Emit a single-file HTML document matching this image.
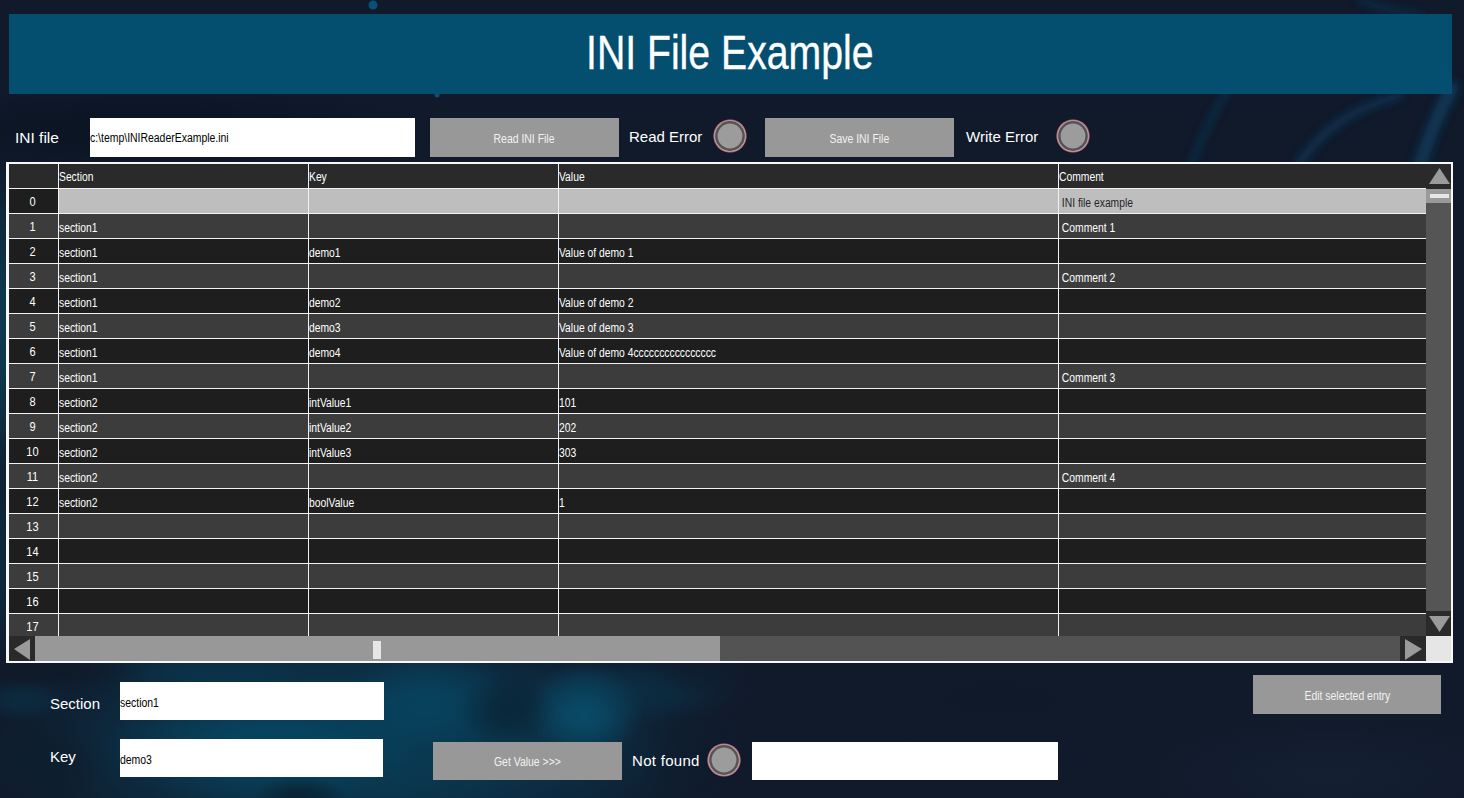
<!DOCTYPE html>
<html><head><meta charset="utf-8">
<style>
html,body{margin:0;padding:0;}
body{width:1464px;height:798px;position:relative;overflow:hidden;background:#101a2b;font-family:"Liberation Sans",sans-serif;}
.abs{position:absolute;}
.bg{position:absolute;left:0;top:0;}
.cell{position:absolute;height:24px;line-height:24px;font-size:12px;color:#fff;white-space:pre;transform:scaleX(0.86);transform-origin:0 0;}
.num{position:absolute;width:49px;height:24px;line-height:24px;font-size:13px;color:#fff;text-align:center;transform:scaleX(0.85);}
.lbl{position:absolute;font-size:15px;color:#fff;white-space:pre;line-height:18px;}
.btn{position:absolute;background:#989898;color:#f2f2f2;font-size:12px;text-align:center;}
.btn span{display:inline-block;transform:scaleX(0.87);}
.tb{position:absolute;background:#fff;}
.tbt{position:absolute;color:#000;font-size:12px;white-space:pre;transform:scaleX(0.87);transform-origin:0 0;}
.led{position:absolute;width:34px;height:34px;}
</style></head>
<body>
<div class="bg" style="width:1464px;height:798px;background:#101a2b;"></div>
<div class="abs" style="left:-20px;top:605px;width:760px;height:280px;background:radial-gradient(closest-side,rgba(8,62,88,0.95) 0%,rgba(8,62,88,0.807) 30%,rgba(8,62,88,0.475) 60%,rgba(8,62,88,0.142) 85%,rgba(8,62,88,0) 100%);"></div>
<div class="abs" style="left:100px;top:685px;width:320px;height:120px;background:radial-gradient(closest-side,rgba(5,78,108,0.55) 0%,rgba(5,78,108,0.468) 30%,rgba(5,78,108,0.275) 60%,rgba(5,78,108,0.083) 85%,rgba(5,78,108,0) 100%);"></div>
<div class="abs" style="left:525px;top:662px;width:120px;height:100px;background:radial-gradient(closest-side,rgba(8,84,115,0.8) 0%,rgba(8,84,115,0.680) 30%,rgba(8,84,115,0.400) 60%,rgba(8,84,115,0.120) 85%,rgba(8,84,115,0) 100%);"></div>
<div class="abs" style="left:530px;top:655px;width:220px;height:70px;background:radial-gradient(closest-side,rgba(8,60,85,0.45) 0%,rgba(8,60,85,0.383) 30%,rgba(8,60,85,0.225) 60%,rgba(8,60,85,0.068) 85%,rgba(8,60,85,0) 100%);"></div>
<div class="abs" style="left:340px;top:650px;width:180px;height:100px;background:radial-gradient(closest-side,rgba(6,74,104,0.6) 0%,rgba(6,74,104,0.510) 30%,rgba(6,74,104,0.300) 60%,rgba(6,74,104,0.090) 85%,rgba(6,74,104,0) 100%);"></div>
<div class="abs" style="left:80px;top:647px;width:240px;height:50px;background:radial-gradient(closest-side,rgba(8,60,85,0.5) 0%,rgba(8,60,85,0.425) 30%,rgba(8,60,85,0.250) 60%,rgba(8,60,85,0.075) 85%,rgba(8,60,85,0) 100%);"></div>
<div class="abs" style="left:650px;top:647px;width:100px;height:50px;background:radial-gradient(closest-side,rgba(14,30,48,0.6) 0%,rgba(14,30,48,0.510) 30%,rgba(14,30,48,0.300) 60%,rgba(14,30,48,0.090) 85%,rgba(14,30,48,0) 100%);"></div>
<div class="abs" style="left:455px;top:672px;width:100px;height:76px;background:radial-gradient(closest-side,rgba(9,32,48,0.6) 0%,rgba(9,32,48,0.510) 30%,rgba(9,32,48,0.300) 60%,rgba(9,32,48,0.090) 85%,rgba(9,32,48,0) 100%);"></div>
<div class="abs" style="left:250px;top:776px;width:100px;height:44px;background:radial-gradient(closest-side,rgba(10,30,45,0.8) 0%,rgba(10,30,45,0.680) 30%,rgba(10,30,45,0.400) 60%,rgba(10,30,45,0.120) 85%,rgba(10,30,45,0) 100%);"></div>
<div class="abs" style="left:-30px;top:720px;width:140px;height:90px;background:radial-gradient(closest-side,rgba(13,30,45,0.9) 0%,rgba(13,30,45,0.765) 30%,rgba(13,30,45,0.450) 60%,rgba(13,30,45,0.135) 85%,rgba(13,30,45,0) 100%);"></div>
<div class="abs" style="left:-10px;top:654px;width:160px;height:36px;background:radial-gradient(closest-side,rgba(14,26,41,0.7) 0%,rgba(14,26,41,0.595) 30%,rgba(14,26,41,0.350) 60%,rgba(14,26,41,0.105) 85%,rgba(14,26,41,0) 100%);"></div>
<div class="abs" style="left:-30px;top:678px;width:100px;height:44px;background:radial-gradient(closest-side,rgba(10,50,70,0.7) 0%,rgba(10,50,70,0.595) 30%,rgba(10,50,70,0.350) 60%,rgba(10,50,70,0.105) 85%,rgba(10,50,70,0) 100%);"></div>
<div class="abs" style="left:640px;top:700px;width:120px;height:120px;background:radial-gradient(closest-side,rgba(14,26,42,0.6) 0%,rgba(14,26,42,0.510) 30%,rgba(14,26,42,0.300) 60%,rgba(14,26,42,0.090) 85%,rgba(14,26,42,0) 100%);"></div>
<div class="abs" style="left:-30px;top:160px;width:60px;height:340px;background:radial-gradient(closest-side,rgba(11,62,85,0.9) 0%,rgba(11,62,85,0.765) 30%,rgba(11,62,85,0.450) 60%,rgba(11,62,85,0.135) 85%,rgba(11,62,85,0) 100%);"></div>
<div class="abs" style="left:-25px;top:450px;width:50px;height:220px;background:radial-gradient(closest-side,rgba(11,44,64,0.8) 0%,rgba(11,44,64,0.680) 30%,rgba(11,44,64,0.400) 60%,rgba(11,44,64,0.120) 85%,rgba(11,44,64,0) 100%);"></div>
<div class="abs" style="left:-150px;top:80px;width:600px;height:100px;background:radial-gradient(closest-side,rgba(8,18,31,0.7) 0%,rgba(8,18,31,0.595) 30%,rgba(8,18,31,0.350) 60%,rgba(8,18,31,0.105) 85%,rgba(8,18,31,0) 100%);"></div>
<div class="abs" style="left:1150px;top:720px;width:360px;height:110px;background:radial-gradient(closest-side,rgba(24,36,56,0.5) 0%,rgba(24,36,56,0.425) 30%,rgba(24,36,56,0.250) 60%,rgba(24,36,56,0.075) 85%,rgba(24,36,56,0) 100%);"></div>
<div class="abs" style="left:800px;top:640px;width:400px;height:120px;background:radial-gradient(closest-side,rgba(14,24,40,0.4) 0%,rgba(14,24,40,0.340) 30%,rgba(14,24,40,0.200) 60%,rgba(14,24,40,0.060) 85%,rgba(14,24,40,0) 100%);"></div>
<svg class="bg" width="1464" height="798" viewBox="0 0 1464 798">
<defs><filter id="b3" filterUnits="userSpaceOnUse" x="0" y="0" width="1464" height="798"><feGaussianBlur stdDeviation="4"/></filter></defs>
<g filter="url(#b3)" fill="none" stroke="#0f3c5e" stroke-linecap="round">
 <path d="M1190,170 C1200,140 1215,110 1230,85" stroke-width="5" opacity="0.7"/>
 <path d="M1295,170 C1320,130 1350,110 1400,95" stroke-width="7" opacity="0.8"/>
 <path d="M1418,172 C1427,140 1440,110 1452,88" stroke-width="13" opacity="0.85"/>
 <path d="M1360,0 C1380,8 1400,14 1420,16" stroke-width="6" opacity="0.6"/>
</g>
<circle cx="373" cy="5" r="4.5" fill="#0b4e78"/>
<circle cx="437" cy="95" r="2.5" fill="#0b4e78"/>
</svg>
<div class="abs" style="left:9px;top:14px;width:1443px;height:80px;background:#044e70;"></div>
<div class="abs" style="left:586px;top:23px;height:60px;line-height:60px;color:#fff;font-size:47.5px;white-space:pre;transform:scaleX(0.825);transform-origin:0 0;-webkit-text-stroke:0.35px #fff;">INI File Example</div>

<div class="lbl" style="left:15px;top:129px;font-size:15.5px;">INI file</div>
<div class="tb" style="left:90px;top:118px;width:325px;height:39px;"></div><div class="tbt" style="left:90px;top:131px;">c:\temp\INIReaderExample.ini</div>
<div class="btn" style="left:430px;top:118px;width:189px;height:39px;line-height:42px;"><span>Read INI File</span></div>
<div class="lbl" style="left:629px;top:128px;">Read Error</div>
<svg class="led" style="left:713px;top:119px;" viewBox="0 0 34 34"><circle cx="17" cy="17" r="16.6" fill="#c86e7e"/><circle cx="17" cy="17" r="15.6" fill="#b4b4b4"/><circle cx="17" cy="17" r="14.9" fill="#545454"/><circle cx="17" cy="17" r="12.4" fill="#9c9c9c"/></svg>
<div class="btn" style="left:765px;top:118px;width:189px;height:39px;line-height:42px;"><span>Save INI File</span></div>
<div class="lbl" style="left:966px;top:128px;">Write Error</div>
<svg class="led" style="left:1056px;top:119px;" viewBox="0 0 34 34"><circle cx="17" cy="17" r="16.6" fill="#c86e7e"/><circle cx="17" cy="17" r="15.6" fill="#b4b4b4"/><circle cx="17" cy="17" r="14.9" fill="#545454"/><circle cx="17" cy="17" r="12.4" fill="#9c9c9c"/></svg>

<div class="abs" style="left:6px;top:162px;width:1447px;height:501px;background:#f8f8f8;"></div>
<div class="abs" style="left:9px;top:164px;width:1442px;height:497px;background:#1e1e1e;"></div>
<div class="abs" style="left:9px;top:164px;width:1417px;height:24px;background:#2a2a2a"></div>
<div class="cell" style="left:59px;top:165px;">Section</div>
<div class="cell" style="left:309px;top:165px;">Key</div>
<div class="cell" style="left:559px;top:165px;">Value</div>
<div class="cell" style="left:1059px;top:165px;">Comment</div>
<div class="abs" style="left:9px;top:189px;width:49px;height:24px;background:#1e1e1e"></div>
<div class="abs" style="left:59px;top:189px;width:1367px;height:24px;background:#bebebe"></div>
<div class="num" style="left:8px;top:190px;">0</div>
<div class="cell" style="left:1059px;top:191px;color:#262626">&nbsp;INI file example</div>
<div class="abs" style="left:9px;top:214px;width:49px;height:24px;background:#3c3c3c"></div>
<div class="abs" style="left:59px;top:214px;width:1367px;height:24px;background:#3c3c3c"></div>
<div class="num" style="left:8px;top:215px;">1</div>
<div class="cell" style="left:59px;top:216px;color:#ffffff">section1</div>
<div class="cell" style="left:1059px;top:216px;color:#ffffff">&nbsp;Comment 1</div>
<div class="abs" style="left:9px;top:239px;width:49px;height:24px;background:#1e1e1e"></div>
<div class="abs" style="left:59px;top:239px;width:1367px;height:24px;background:#1e1e1e"></div>
<div class="num" style="left:8px;top:240px;">2</div>
<div class="cell" style="left:59px;top:241px;color:#ffffff">section1</div>
<div class="cell" style="left:309px;top:241px;color:#ffffff">demo1</div>
<div class="cell" style="left:559px;top:241px;color:#ffffff">Value of demo 1</div>
<div class="abs" style="left:9px;top:264px;width:49px;height:24px;background:#3c3c3c"></div>
<div class="abs" style="left:59px;top:264px;width:1367px;height:24px;background:#3c3c3c"></div>
<div class="num" style="left:8px;top:265px;">3</div>
<div class="cell" style="left:59px;top:266px;color:#ffffff">section1</div>
<div class="cell" style="left:1059px;top:266px;color:#ffffff">&nbsp;Comment 2</div>
<div class="abs" style="left:9px;top:289px;width:49px;height:24px;background:#1e1e1e"></div>
<div class="abs" style="left:59px;top:289px;width:1367px;height:24px;background:#1e1e1e"></div>
<div class="num" style="left:8px;top:290px;">4</div>
<div class="cell" style="left:59px;top:291px;color:#ffffff">section1</div>
<div class="cell" style="left:309px;top:291px;color:#ffffff">demo2</div>
<div class="cell" style="left:559px;top:291px;color:#ffffff">Value of demo 2</div>
<div class="abs" style="left:9px;top:314px;width:49px;height:24px;background:#3c3c3c"></div>
<div class="abs" style="left:59px;top:314px;width:1367px;height:24px;background:#3c3c3c"></div>
<div class="num" style="left:8px;top:315px;">5</div>
<div class="cell" style="left:59px;top:316px;color:#ffffff">section1</div>
<div class="cell" style="left:309px;top:316px;color:#ffffff">demo3</div>
<div class="cell" style="left:559px;top:316px;color:#ffffff">Value of demo 3</div>
<div class="abs" style="left:9px;top:339px;width:49px;height:24px;background:#1e1e1e"></div>
<div class="abs" style="left:59px;top:339px;width:1367px;height:24px;background:#1e1e1e"></div>
<div class="num" style="left:8px;top:340px;">6</div>
<div class="cell" style="left:59px;top:341px;color:#ffffff">section1</div>
<div class="cell" style="left:309px;top:341px;color:#ffffff">demo4</div>
<div class="cell" style="left:559px;top:341px;color:#ffffff">Value of demo 4cccccccccccccccc</div>
<div class="abs" style="left:9px;top:364px;width:49px;height:24px;background:#3c3c3c"></div>
<div class="abs" style="left:59px;top:364px;width:1367px;height:24px;background:#3c3c3c"></div>
<div class="num" style="left:8px;top:365px;">7</div>
<div class="cell" style="left:59px;top:366px;color:#ffffff">section1</div>
<div class="cell" style="left:1059px;top:366px;color:#ffffff">&nbsp;Comment 3</div>
<div class="abs" style="left:9px;top:389px;width:49px;height:24px;background:#1e1e1e"></div>
<div class="abs" style="left:59px;top:389px;width:1367px;height:24px;background:#1e1e1e"></div>
<div class="num" style="left:8px;top:390px;">8</div>
<div class="cell" style="left:59px;top:391px;color:#ffffff">section2</div>
<div class="cell" style="left:309px;top:391px;color:#ffffff">intValue1</div>
<div class="cell" style="left:559px;top:391px;color:#ffffff">101</div>
<div class="abs" style="left:9px;top:414px;width:49px;height:24px;background:#3c3c3c"></div>
<div class="abs" style="left:59px;top:414px;width:1367px;height:24px;background:#3c3c3c"></div>
<div class="num" style="left:8px;top:415px;">9</div>
<div class="cell" style="left:59px;top:416px;color:#ffffff">section2</div>
<div class="cell" style="left:309px;top:416px;color:#ffffff">intValue2</div>
<div class="cell" style="left:559px;top:416px;color:#ffffff">202</div>
<div class="abs" style="left:9px;top:439px;width:49px;height:24px;background:#1e1e1e"></div>
<div class="abs" style="left:59px;top:439px;width:1367px;height:24px;background:#1e1e1e"></div>
<div class="num" style="left:8px;top:440px;">10</div>
<div class="cell" style="left:59px;top:441px;color:#ffffff">section2</div>
<div class="cell" style="left:309px;top:441px;color:#ffffff">intValue3</div>
<div class="cell" style="left:559px;top:441px;color:#ffffff">303</div>
<div class="abs" style="left:9px;top:464px;width:49px;height:24px;background:#3c3c3c"></div>
<div class="abs" style="left:59px;top:464px;width:1367px;height:24px;background:#3c3c3c"></div>
<div class="num" style="left:8px;top:465px;">11</div>
<div class="cell" style="left:59px;top:466px;color:#ffffff">section2</div>
<div class="cell" style="left:1059px;top:466px;color:#ffffff">&nbsp;Comment 4</div>
<div class="abs" style="left:9px;top:489px;width:49px;height:24px;background:#1e1e1e"></div>
<div class="abs" style="left:59px;top:489px;width:1367px;height:24px;background:#1e1e1e"></div>
<div class="num" style="left:8px;top:490px;">12</div>
<div class="cell" style="left:59px;top:491px;color:#ffffff">section2</div>
<div class="cell" style="left:309px;top:491px;color:#ffffff">boolValue</div>
<div class="cell" style="left:559px;top:491px;color:#ffffff">1</div>
<div class="abs" style="left:9px;top:514px;width:49px;height:24px;background:#3c3c3c"></div>
<div class="abs" style="left:59px;top:514px;width:1367px;height:24px;background:#3c3c3c"></div>
<div class="num" style="left:8px;top:515px;">13</div>
<div class="abs" style="left:9px;top:539px;width:49px;height:24px;background:#1e1e1e"></div>
<div class="abs" style="left:59px;top:539px;width:1367px;height:24px;background:#1e1e1e"></div>
<div class="num" style="left:8px;top:540px;">14</div>
<div class="abs" style="left:9px;top:564px;width:49px;height:24px;background:#3c3c3c"></div>
<div class="abs" style="left:59px;top:564px;width:1367px;height:24px;background:#3c3c3c"></div>
<div class="num" style="left:8px;top:565px;">15</div>
<div class="abs" style="left:9px;top:589px;width:49px;height:24px;background:#1e1e1e"></div>
<div class="abs" style="left:59px;top:589px;width:1367px;height:24px;background:#1e1e1e"></div>
<div class="num" style="left:8px;top:590px;">16</div>
<div class="abs" style="left:9px;top:614px;width:49px;height:22px;background:#3c3c3c"></div>
<div class="abs" style="left:59px;top:614px;width:1367px;height:22px;background:#3c3c3c"></div>
<div class="num" style="left:8px;top:615px;">17</div>
<div class="abs" style="left:9px;top:188px;width:1417px;height:1px;background:#f2f2f2"></div>
<div class="abs" style="left:9px;top:213px;width:1417px;height:1px;background:#f2f2f2"></div>
<div class="abs" style="left:9px;top:238px;width:1417px;height:1px;background:#f2f2f2"></div>
<div class="abs" style="left:9px;top:263px;width:1417px;height:1px;background:#f2f2f2"></div>
<div class="abs" style="left:9px;top:288px;width:1417px;height:1px;background:#f2f2f2"></div>
<div class="abs" style="left:9px;top:313px;width:1417px;height:1px;background:#f2f2f2"></div>
<div class="abs" style="left:9px;top:338px;width:1417px;height:1px;background:#f2f2f2"></div>
<div class="abs" style="left:9px;top:363px;width:1417px;height:1px;background:#f2f2f2"></div>
<div class="abs" style="left:9px;top:388px;width:1417px;height:1px;background:#f2f2f2"></div>
<div class="abs" style="left:9px;top:413px;width:1417px;height:1px;background:#f2f2f2"></div>
<div class="abs" style="left:9px;top:438px;width:1417px;height:1px;background:#f2f2f2"></div>
<div class="abs" style="left:9px;top:463px;width:1417px;height:1px;background:#f2f2f2"></div>
<div class="abs" style="left:9px;top:488px;width:1417px;height:1px;background:#f2f2f2"></div>
<div class="abs" style="left:9px;top:513px;width:1417px;height:1px;background:#f2f2f2"></div>
<div class="abs" style="left:9px;top:538px;width:1417px;height:1px;background:#f2f2f2"></div>
<div class="abs" style="left:9px;top:563px;width:1417px;height:1px;background:#f2f2f2"></div>
<div class="abs" style="left:9px;top:588px;width:1417px;height:1px;background:#f2f2f2"></div>
<div class="abs" style="left:9px;top:613px;width:1417px;height:1px;background:#f2f2f2"></div>
<div class="abs" style="left:58px;top:164px;width:1px;height:472px;background:#f2f2f2"></div>
<div class="abs" style="left:308px;top:164px;width:1px;height:472px;background:#f2f2f2"></div>
<div class="abs" style="left:558px;top:164px;width:1px;height:472px;background:#f2f2f2"></div>
<div class="abs" style="left:1058px;top:164px;width:1px;height:472px;background:#f2f2f2"></div>
<div class="abs" style="left:1426px;top:164px;width:25px;height:472px;background:#555555;"></div>
<div class="abs" style="left:1426px;top:164px;width:25px;height:25px;background:#2a2a2a;"></div>
<svg class="abs" style="left:1426px;top:164px;" width="25" height="25"><polygon points="3,20 13.5,4 24,20" fill="#9a9a9a"/></svg>
<div class="abs" style="left:1426px;top:189px;width:25px;height:14px;background:#9a9a9a;"></div>
<div class="abs" style="left:1430px;top:194px;width:19px;height:4px;background:#e6e6e6;"></div>
<div class="abs" style="left:1426px;top:611px;width:25px;height:25px;background:#2a2a2a;"></div>
<svg class="abs" style="left:1426px;top:611px;" width="25" height="25"><polygon points="3,5 24,5 13.5,21" fill="#9a9a9a"/></svg>
<div class="abs" style="left:9px;top:636px;width:1417px;height:25px;background:#535353;"></div>
<div class="abs" style="left:9px;top:636px;width:26px;height:25px;background:#2a2a2a;"></div>
<svg class="abs" style="left:9px;top:636px;" width="26" height="25"><polygon points="5,13 21,3 21,24" fill="#9a9a9a"/></svg>
<div class="abs" style="left:35px;top:636px;width:685px;height:25px;background:#989898;"></div>
<div class="abs" style="left:373px;top:641px;width:8px;height:18px;background:#e6e6e6;"></div>
<div class="abs" style="left:1400px;top:636px;width:26px;height:25px;background:#2a2a2a;"></div>
<svg class="abs" style="left:1400px;top:636px;" width="26" height="25"><polygon points="5,3 22,13 5,24" fill="#9a9a9a"/></svg>
<div class="abs" style="left:1426px;top:636px;width:25px;height:25px;background:#e6e6e6;"></div>

<div class="lbl" style="left:50px;top:695px;">Section</div>
<div class="tb" style="left:120px;top:682px;width:264px;height:38px;"></div><div class="tbt" style="left:120px;top:696px;">section1</div>
<div class="lbl" style="left:50px;top:748px;">Key</div>
<div class="tb" style="left:120px;top:739px;width:263px;height:38px;"></div><div class="tbt" style="left:120px;top:753px;">demo3</div>
<div class="btn" style="left:433px;top:742px;width:189px;height:38px;line-height:41px;"><span>Get Value &gt;&gt;&gt;</span></div>
<div class="lbl" style="left:632px;top:752px;letter-spacing:0.3px;">Not found</div>
<svg class="led" style="left:707px;top:743px;" viewBox="0 0 34 34"><circle cx="17" cy="17" r="16.6" fill="#c86e7e"/><circle cx="17" cy="17" r="15.6" fill="#b4b4b4"/><circle cx="17" cy="17" r="14.9" fill="#545454"/><circle cx="17" cy="17" r="12.4" fill="#9c9c9c"/></svg>
<div class="tb" style="left:752px;top:742px;width:306px;height:38px;"></div>
<div class="btn" style="left:1253px;top:675px;width:188px;height:39px;line-height:42px;"><span>Edit selected entry</span></div>
</body></html>
